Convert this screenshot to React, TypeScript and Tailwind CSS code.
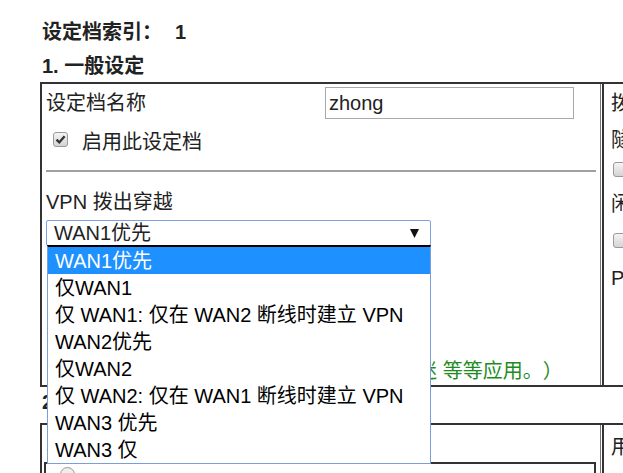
const vpnOptions = [
  "WAN1优先",
  "仅WAN1",
  "仅 WAN1: 仅在 WAN2 断线时建立 VPN",
  "WAN2优先",
  "仅WAN2",
  "仅 WAN2: 仅在 WAN1 断线时建立 VPN",
  "WAN3 优先",
  "WAN3 仅",
];

const CheckBox = ({ checked = false }: { checked?: boolean }) => (
  <span className="flex h-[15px] w-[15px] shrink-0 items-center justify-center rounded-[3px] border border-[#9a9a9a] bg-gradient-to-b from-[#f4f4f4] to-[#d4d4d4]">
    {checked && (
      <svg width="11" height="11" viewBox="0 0 11 11">
        <path d="M1.5 5.6 L4.3 8.4 L9.6 2.2" fill="none" stroke="#333" strokeWidth="2.3" />
      </svg>
    )}
  </span>
);

const App = () => {
  return (
    <div className="relative h-[473px] w-[623px] overflow-hidden bg-white font-['Liberation_Sans','Noto_Sans_CJK_SC',sans-serif] text-[20px] leading-[24px] text-[#222] [text-spacing-trim:space-all]">
      {/* Headings */}
      <div className="pl-[42px] pt-[20px] font-bold">
        设定档索引：<span className="ml-[13px]">1</span>
      </div>
      <div className="mt-[10px] pl-[42px] font-bold">1. 一般设定</div>

      {/* General settings table */}
      <div className="ml-[40px] mt-[4px] flex h-[305px] w-[700px] border-y-2 border-l-2 border-[#333]">
        <div className="flex w-[559px] shrink-0 flex-col border-r border-[#777] pl-[4px]">
          <div className="mt-[3px] flex h-[32px] items-center">
            <span className="w-[279px] shrink-0">设定档名称</span>
            <div className="flex h-[32px] w-[249px] items-center border border-[#a9a9a9] pl-[3px]">zhong</div>
          </div>

          <div className="mt-[5px] flex h-[30px] items-center pl-[7px]">
            <CheckBox checked />
            <span className="ml-[14px] pt-[5px]">启用此设定档</span>
          </div>

          <div className="mr-[4px] mt-[16px] border-t-2 border-[#a0a0a0]" />

          <div className="mt-[18px]">VPN 拨出穿越</div>

          <div className="relative mt-[6px] w-[385px]">
            <div className="flex h-[26px] items-center justify-between rounded-[2px] border border-[#7aa3e0] pl-[7px] pr-[11px]">
              <span>WAN1优先</span>
              <svg width="9" height="9" viewBox="0 0 9 9">
                <polygon points="0,0 9,0 4.5,9" fill="#111" />
              </svg>
            </div>

            {/* open option list */}
            <div className="absolute left-[1px] top-[25px] z-10 w-[384px] border-x border-b border-t-2 border-x-[#7a9fd8] border-b-[#7a9fd8] border-t-black bg-white">
              {vpnOptions.map((opt, i) => (
                <div
                  key={opt}
                  className={`flex h-[27px] items-center whitespace-nowrap pl-[7px] ${
                    i === 0 ? 'bg-[#1e90ff] text-white' : 'text-black'
                  }`}
                >
                  {opt}
                </div>
              ))}
            </div>
          </div>

          <div className="mt-[79px] whitespace-nowrap">注：选择 VPN 使用的 WAN 接口</div>
          <div className="mt-[10px] whitespace-nowrap text-[#1e8c1e]">
            （例如：QQ、网页、在线游戏、视频、球迷 等等应用。）
          </div>
        </div>

        <div className="ml-[1px] flex flex-1 flex-col whitespace-nowrap border-l-2 border-[#333] pl-[7px]">
          <div className="mt-[7px]">拨出方向</div>
          <div className="mt-[13px]">隧道模式</div>
          <div className="ml-[2px] mt-[10px]">
            <CheckBox />
          </div>
          <div className="mt-[15px]">闲置超时</div>
          <div className="ml-[2px] mt-[17px]">
            <CheckBox />
          </div>
          <div className="mt-[18px]">PPTP</div>
        </div>
      </div>

      <div className="mt-[3px] pl-[42px] font-bold">2. 拨入设定</div>

      {/* Dial-in settings table */}
      <div className="ml-[40px] mt-[9px] flex h-[120px] w-[700px] border-l-2 border-t-2 border-[#333]">
        <div className="flex w-[559px] shrink-0 flex-col border-r border-[#777] pl-[4px]">
          <div className="mt-[5px] whitespace-nowrap">允许拨入的服务类型</div>
          <div className="-ml-[2px] mr-[4px] mt-[8px] h-[60px] border-2 border-[#333] pl-[14px] pt-[3px]">
            <span className="block h-[15px] w-[15px] rounded-full border border-[#999] bg-[#eee]" />
          </div>
        </div>
        <div className="ml-[1px] flex-1 whitespace-nowrap border-l-2 border-[#333] pl-[7px]">
          <div className="mt-[10px]">用户名称</div>
        </div>
      </div>
    </div>
  );
};

export default App;
